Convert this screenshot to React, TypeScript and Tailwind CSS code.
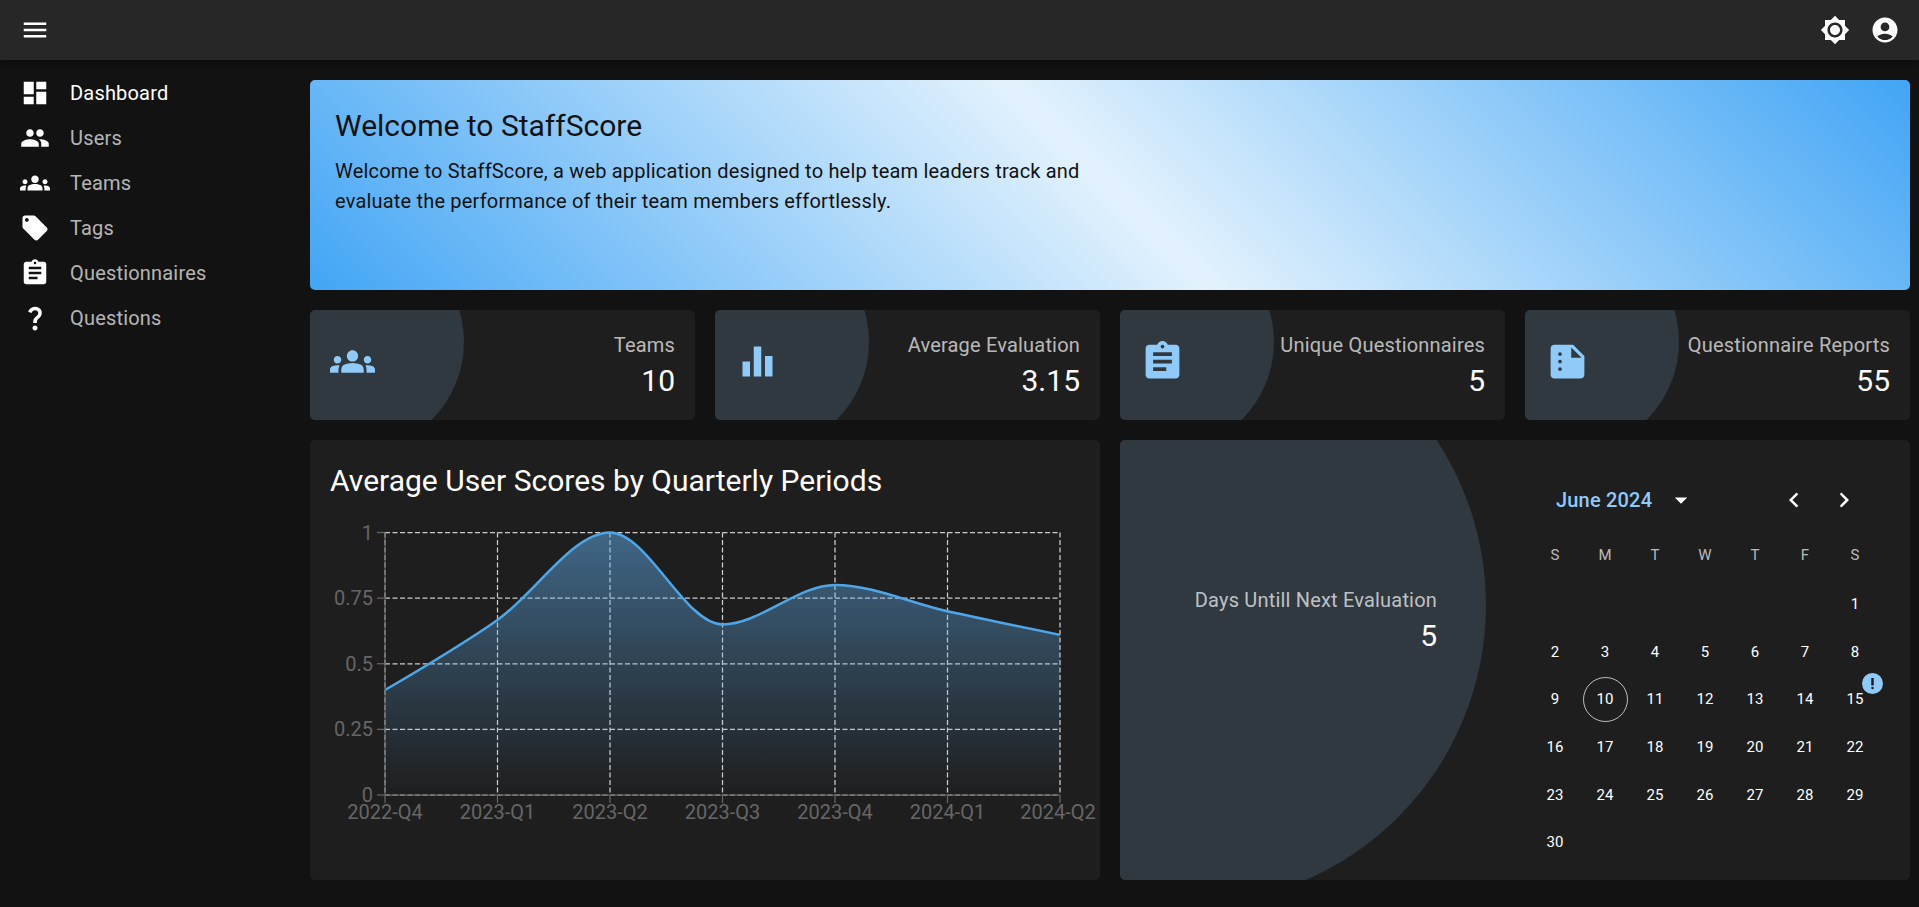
import type { ReactNode } from 'react'

const icons = {
  menu: 'M3 18h18v-2H3v2zm0-5h18v-2H3v2zm0-7v2h18V6H3z',
  dashboard: 'M3 13h8V3H3v10zm0 8h8v-6H3v6zm10 0h8V11h-8v10zm0-18v6h8V3h-8z',
  people:
    'M16 11c1.66 0 2.99-1.34 2.99-3S17.66 5 16 5c-1.66 0-3 1.34-3 3s1.34 3 3 3zm-8 0c1.66 0 2.99-1.34 2.99-3S9.66 5 8 5C6.34 5 5 6.34 5 8s1.34 3 3 3zm0 2c-2.33 0-7 1.17-7 3.5V19h14v-2.5c0-2.33-4.67-3.5-7-3.5zm8 0c-.29 0-.62.02-.97.05 1.16.84 1.97 1.97 1.97 3.45V19h6v-2.5c0-2.33-4.67-3.5-7-3.5z',
  groups:
    'M12 12.75c1.63 0 3.07.39 4.24.9 1.08.48 1.76 1.56 1.76 2.73V18H6v-1.61c0-1.18.68-2.26 1.76-2.73 1.17-.52 2.61-.91 4.24-.91zM4 13c1.1 0 2-.9 2-2s-.9-2-2-2-2 .9-2 2 .9 2 2 2zm1.13 1.1c-.37-.06-.74-.1-1.13-.1-.99 0-1.93.21-2.78.58C.48 14.9 0 15.62 0 16.43V18h4.5v-1.61c0-.83.23-1.61.63-2.29zM20 13c1.1 0 2-.9 2-2s-.9-2-2-2-2 .9-2 2 .9 2 2 2zm4 3.43c0-.81-.48-1.53-1.22-1.85-.85-.37-1.79-.58-2.78-.58-.39 0-.76.04-1.13.1.4.68.63 1.46.63 2.29V18H24v-1.57zM12 6c1.66 0 3 1.34 3 3s-1.34 3-3 3-3-1.34-3-3 1.34-3 3-3z',
  tag: 'M21.41 11.58l-9-9C12.05 2.22 11.55 2 11 2H4c-1.1 0-2 .9-2 2v7c0 .55.22 1.05.59 1.42l9 9c.36.36.86.58 1.41.58.55 0 1.05-.22 1.41-.59l7-7c.37-.36.59-.86.59-1.41 0-.55-.23-1.06-.59-1.42zM5.5 7C4.67 7 4 6.33 4 5.5S4.67 4 5.5 4 7 4.67 7 5.5 6.33 7 5.5 7z',
  assignment:
    'M19 3h-4.18C14.4 1.84 13.3 1 12 1c-1.3 0-2.4.84-2.82 2H5c-1.1 0-2 .9-2 2v14c0 1.1.9 2 2 2h14c1.1 0 2-.9 2-2V5c0-1.1-.9-2-2-2zm-7 0c.55 0 1 .45 1 1s-.45 1-1 1-1-.45-1-1 .45-1 1-1zm2 14H7v-2h7v2zm3-4H7v-2h10v2zm0-4H7V7h10v2z',
  question:
    'M11.07 12.85c.77-1.39 2.25-2.21 3.11-3.44.91-1.29.4-3.7-2.18-3.7-1.69 0-2.52 1.28-2.87 2.34L6.54 6.96C7.25 4.83 9.18 3 11.99 3c2.35 0 3.96 1.07 4.78 2.41.7 1.15 1.11 3.3.03 4.9-1.2 1.77-2.35 2.31-2.97 3.45-.25.46-.35.76-.35 2.24h-2.89c-.01-.78-.13-2.05.48-3.15zM14 20c0 1.1-.9 2-2 2s-2-.9-2-2 .9-2 2-2 2 .9 2 2z',
  equalizer: 'M10 20h4V4h-4v16zm-6 0h4v-8H4v8zM16 9v11h4V9h-4z',
  summarize:
    'M15 3H5c-1.1 0-1.99.9-1.99 2L3 19c0 1.1.89 2 1.99 2H19c1.1 0 2-.9 2-2V9l-6-6zM8 17c-.55 0-1-.45-1-1s.45-1 1-1 1 .45 1 1-.45 1-1 1zm0-4c-.55 0-1-.45-1-1s.45-1 1-1 1 .45 1 1-.45 1-1 1zm0-4c-.55 0-1-.45-1-1s.45-1 1-1 1 .45 1 1-.45 1-1 1zm6 1V4.5l5.5 5.5H14z',
  brightness:
    'M20 8.69V4h-4.69L12 .69 8.69 4H4v4.69L.69 12 4 15.31V20h4.69L12 23.31 15.31 20H20v-4.69L23.31 12 20 8.69zM12 18c-3.31 0-6-2.69-6-6s2.69-6 6-6 6 2.69 6 6-2.69 6-6 6zm0-10c-2.21 0-4 1.79-4 4s1.79 4 4 4 4-1.79 4-4-1.79-4-4-4z',
  account:
    'M12 2C6.48 2 2 6.48 2 12s4.48 10 10 10 10-4.48 10-10S17.52 2 12 2zm0 4c1.93 0 3.5 1.57 3.5 3.5S13.93 13 12 13s-3.5-1.57-3.5-3.5S10.07 6 12 6zm0 14c-2.03 0-4.43-.82-6.14-2.88C7.55 15.8 9.68 15 12 15s4.45.8 6.14 2.12C16.43 19.18 14.03 20 12 20z',
  dropdown: 'M7 10l5 5 5-5z',
  chevronLeft: 'M15.41 7.41 14 6l-6 6 6 6 1.41-1.41L10.83 12z',
  chevronRight: 'M10 6 8.59 7.41 13.17 12l-4.58 4.59L10 18l6-6z',
  priority: 'M10 19a2 2 0 1 0 4 0a2 2 0 1 0-4 0zM10 3h4v12h-4z',
}

function Icon({ path, className }: { path: string; className?: string }) {
  return (
    <svg className={className} fill="currentColor" viewBox="0 0 24 24">
      <path d={path} />
    </svg>
  )
}

const navItems = [
  { label: 'Dashboard', icon: icons.dashboard, active: true },
  { label: 'Users', icon: icons.people },
  { label: 'Teams', icon: icons.groups },
  { label: 'Tags', icon: icons.tag },
  { label: 'Questionnaires', icon: icons.assignment },
  { label: 'Questions', icon: icons.question },
]

const stats = [
  { label: 'Teams', value: '10', icon: icons.groups },
  { label: 'Average Evaluation', value: '3.15', icon: icons.equalizer },
  { label: 'Unique Questionnaires', value: '5', icon: icons.assignment },
  { label: 'Questionnaire Reports', value: '55', icon: icons.summarize },
]

function StatCard({ label, value, icon }: (typeof stats)[number]) {
  return (
    <div className="relative flex h-[110px] items-center justify-between overflow-hidden rounded-[5px] bg-[#1e1e1e] pr-[20px]">
      <div className="absolute top-[-78px] left-[-66px] size-[220px] rounded-full bg-[#303840]" />
      <Icon className="relative mb-[8px] ml-[20px] size-[45px] shrink-0 text-[#90caf9]" path={icon} />
      <div className="relative text-right">
        <div className="text-[20px] leading-[30px] tracking-[0.00938em] text-[rgba(255,255,255,0.7)]">
          {label}
        </div>
        <div className="mt-[1px] text-[30px] leading-[40px] text-white">{value}</div>
      </div>
    </div>
  )
}

// same as d3 curveMonotoneX, which is what the chart lib draws
function monotonePath(points: [number, number][]) {
  const n = points.length
  const sign = (v: number) => (v < 0 ? -1 : 1)
  const t: number[] = new Array(n).fill(0)
  for (let i = 1; i < n - 1; i++) {
    const h0 = points[i][0] - points[i - 1][0]
    const h1 = points[i + 1][0] - points[i][0]
    const s0 = (points[i][1] - points[i - 1][1]) / h0
    const s1 = (points[i + 1][1] - points[i][1]) / h1
    const p = (s0 * h1 + s1 * h0) / (h0 + h1)
    t[i] = (sign(s0) + sign(s1)) * Math.min(Math.abs(s0), Math.abs(s1), 0.5 * Math.abs(p))
  }
  const h = points[1][0] - points[0][0]
  t[0] = (3 * (points[1][1] - points[0][1])) / h / 2 - t[1] / 2
  t[n - 1] = (3 * (points[n - 1][1] - points[n - 2][1])) / h / 2 - t[n - 2] / 2

  let d = `M${points[0][0]},${points[0][1]}`
  for (let i = 1; i < n; i++) {
    const dx = (points[i][0] - points[i - 1][0]) / 3
    d += `C${points[i - 1][0] + dx},${points[i - 1][1] + dx * t[i - 1]},${points[i][0] - dx},${points[i][1] - dx * t[i]},${points[i][0]},${points[i][1]}`
  }
  return d
}

const quarters = ['2022-Q4', '2023-Q1', '2023-Q2', '2023-Q3', '2023-Q4', '2024-Q1', '2024-Q2']
const scores = [0.4, 0.667, 1, 0.65, 0.8, 0.7, 0.61]
const yTicks = [
  { label: '0', value: 0 },
  { label: '0.25', value: 0.25 },
  { label: '0.5', value: 0.5 },
  { label: '0.75', value: 0.75 },
  { label: '1', value: 1 },
]

function ScoreChart() {
  const left = 75
  const right = 750
  const top = 12.5
  const bottom = 275
  const xAt = (i: number) => left + ((right - left) / 6) * i
  const yAt = (v: number) => bottom - (bottom - top) * v
  const line = monotonePath(scores.map((v, i) => [xAt(i), yAt(v)]))

  return (
    <svg className="block h-[330px] w-[790px]" style={{ fontFamily: 'Roboto, sans-serif' }}>
      <defs>
        <linearGradient id="scoreFill" x1="0" x2="0" y1="0" y2="1">
          <stop offset="0%" stopColor="#64b5f6" stopOpacity="0.48" />
          <stop offset="100%" stopColor="#64b5f6" stopOpacity="0" />
        </linearGradient>
      </defs>
      <g fill="none" stroke="#ccc" strokeDasharray="5 2.5" strokeWidth="1.25">
        {yTicks.map((tick) => (
          <line key={tick.label} x1={left} x2={right} y1={yAt(tick.value)} y2={yAt(tick.value)} />
        ))}
        {quarters.map((q, i) => (
          <line key={q} x1={xAt(i)} x2={xAt(i)} y1={top} y2={bottom} />
        ))}
      </g>
      <path d={`${line}L${right},${bottom}L${left},${bottom}Z`} fill="url(#scoreFill)" />
      <path d={line} fill="none" stroke="#4ea6e8" strokeWidth="2.5" />
      <g stroke="#666" strokeWidth="1.25">
        <line x1={left} x2={right} y1={bottom} y2={bottom} />
        <line x1={left} x2={left} y1={top} y2={bottom} />
        {yTicks.map((tick) => (
          <line key={tick.label} x1={left - 8} x2={left} y1={yAt(tick.value)} y2={yAt(tick.value)} />
        ))}
        {quarters.map((q, i) => (
          <line key={q} x1={xAt(i)} x2={xAt(i)} y1={bottom} y2={bottom + 8} />
        ))}
      </g>
      <g fill="#666" fontSize="20">
        {yTicks.map((tick) => (
          <text key={tick.label} dominantBaseline="central" textAnchor="end" x={left - 12} y={yAt(tick.value)}>
            {tick.label}
          </text>
        ))}
        {quarters.map((q, i) => (
          <text
            key={q}
            dominantBaseline="central"
            textAnchor="middle"
            x={i === quarters.length - 1 ? xAt(i) - 2 : xAt(i)}
            y={bottom + 17}
          >
            {q}
          </text>
        ))}
      </g>
    </svg>
  )
}

const weekDays = ['S', 'M', 'T', 'W', 'T', 'F', 'S']
const leadingBlanks = 6
const days = Array.from({ length: 30 }, (_, i) => i + 1)

function DayCell({ children }: { children: ReactNode }) {
  return <div className="relative flex h-[47.6px] items-center justify-center text-[15px]">{children}</div>
}

function EvaluationCalendar() {
  return (
    <div className="mr-[5px] w-[400px] pt-[45px]">
      <div className="flex h-[30px] items-center pr-[46px] pl-[51px]">
        <span className="text-[20px] font-medium tracking-[0.00938em] text-[#90caf9]">June 2024</span>
        <Icon className="ml-[14px] size-[30px] text-white" path={icons.dropdown} />
        <Icon className="ml-auto size-[30px] text-white" path={icons.chevronLeft} />
        <Icon className="ml-[20px] size-[30px] text-white" path={icons.chevronRight} />
      </div>
      <div className="mt-[25px] grid grid-cols-[repeat(7,50px)] justify-center">
        {weekDays.map((day, i) => (
          <div key={i} className="flex h-[30px] items-center justify-center text-[15px] text-[rgba(255,255,255,0.7)]">
            {day}
          </div>
        ))}
      </div>
      <div className="mt-[10.6px] grid grid-cols-[repeat(7,50px)] justify-center text-white">
        {Array.from({ length: leadingBlanks }, (_, i) => (
          <div key={i} />
        ))}
        {days.map((day) => (
          <DayCell key={day}>
            {day === 10 ? (
              <span className="flex size-[45px] items-center justify-center rounded-full border border-[rgba(255,255,255,0.7)]">
                {day}
              </span>
            ) : (
              day
            )}
            {day === 15 && (
              <span className="absolute top-[-3px] left-[32px] flex size-[21px] items-center justify-center rounded-full bg-[#90caf9] text-[#1e1e1e]">
                <Icon className="size-[15px]" path={icons.priority} />
              </span>
            )}
          </DayCell>
        ))}
      </div>
    </div>
  )
}

export default function App() {
  return (
    <div className="min-h-[907px] bg-[#121212] font-['Roboto',sans-serif] text-white">
      <header className="flex h-[60px] items-center justify-between bg-[#272727] pr-[19px] pl-[20px] shadow-[0_2px_4px_-1px_rgba(0,0,0,0.2),0_4px_5px_0_rgba(0,0,0,0.14)]">
        <Icon className="size-[30px]" path={icons.menu} />
        <div className="flex items-center gap-[20px]">
          <Icon className="size-[30px]" path={icons.brightness} />
          <Icon className="size-[30px]" path={icons.account} />
        </div>
      </header>

      <div className="flex">
        <nav className="w-[310px] shrink-0 pt-[10px]">
          {navItems.map((item) => (
            <div key={item.label} className="flex h-[45px] items-center gap-[20px] pl-[20px]">
              <Icon className="size-[30px] shrink-0" path={item.icon} />
              <span
                className={
                  item.active
                    ? 'text-[20px] tracking-[0.00938em] text-white'
                    : 'text-[20px] tracking-[0.00938em] text-[rgba(255,255,255,0.7)]'
                }
              >
                {item.label}
              </span>
            </div>
          ))}
        </nav>

        <main className="w-[1600px] pt-[20px]">
          <section className="h-[210px] rounded-[5px] bg-[linear-gradient(45deg,#42a5f5,#e3f2fd,#42a5f5)] px-[25px] pt-[26px] text-[#121212]">
            <h1 className="text-[30px] leading-[40px]">Welcome to StaffScore</h1>
            <p className="mt-[10px] max-w-[800px] text-[20px] leading-[30px] tracking-[0.00938em]">
              Welcome to StaffScore, a web application designed to help team leaders track and evaluate the
              performance of their team members effortlessly.
            </p>
          </section>

          <div className="mt-[20px] grid grid-cols-4 gap-[20px]">
            {stats.map((stat) => (
              <StatCard key={stat.label} {...stat} />
            ))}
          </div>

          <div className="mt-[20px] grid grid-cols-2 gap-[20px]">
            <section className="h-[440px] rounded-[5px] bg-[#1e1e1e] pt-[21px]">
              <h2 className="px-[20px] text-[30px] leading-[40px]">Average User Scores by Quarterly Periods</h2>
              <div className="mt-[19px]">
                <ScoreChart />
              </div>
            </section>

            <section className="relative flex h-[440px] justify-between overflow-hidden rounded-[5px] bg-[#1e1e1e]">
              <div className="absolute top-[-135px] left-[-234px] size-[600px] rounded-full bg-[#303840]" />
              <div className="relative w-[317px] pt-[145px] text-right">
                <div className="text-[20px] leading-[30px] tracking-[0.00938em] text-[rgba(255,255,255,0.7)]">
                  Days Untill Next Evaluation
                </div>
                <div className="mt-[1px] text-[30px] leading-[40px] text-white">5</div>
              </div>
              <div className="relative">
                <EvaluationCalendar />
              </div>
            </section>
          </div>
        </main>
      </div>
    </div>
  )
}
